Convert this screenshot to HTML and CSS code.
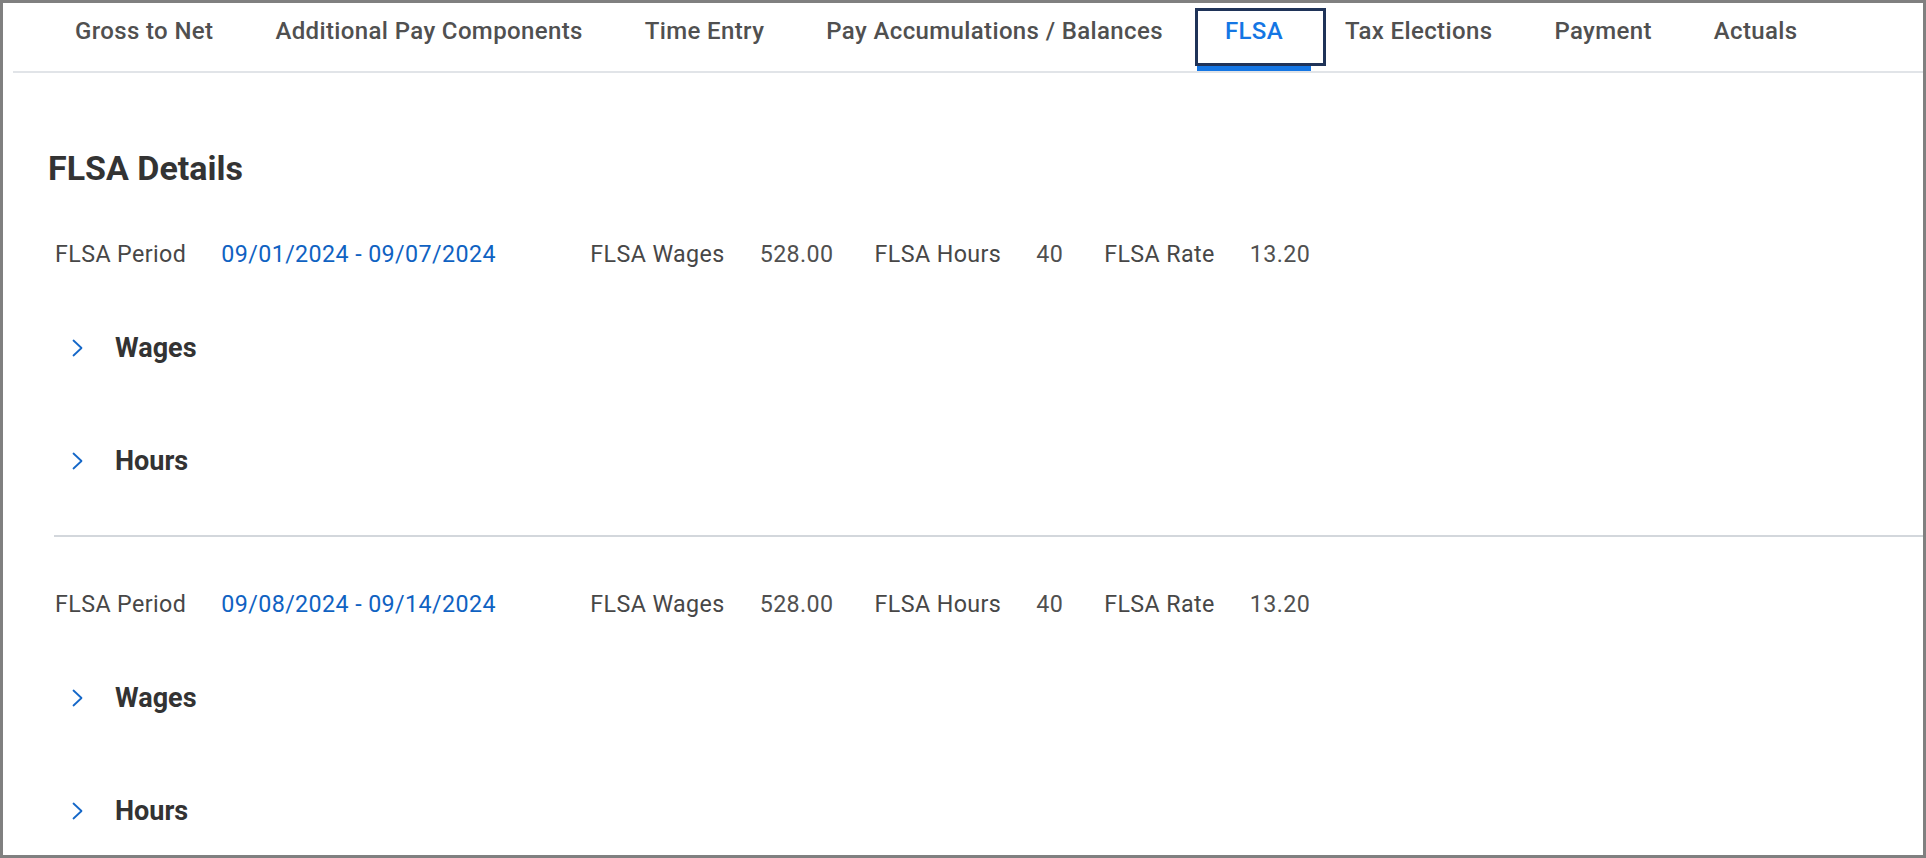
FILE: index.html
```html
<!DOCTYPE html>
<html lang="en">
<head>
<meta charset="utf-8">
<title>FLSA</title>
<link rel="stylesheet" href="styles.css">
</head>
<body>
<div class="frame">
  <nav class="tabbar">
    <a class="tab">Gross to Net</a>
    <a class="tab">Additional Pay Components</a>
    <a class="tab">Time Entry</a>
    <a class="tab">Pay Accumulations / Balances</a>
    <a class="tab active">FLSA</a>
    <a class="tab">Tax Elections</a>
    <a class="tab">Payment</a>
    <a class="tab">Actuals</a>
  </nav>
  <main class="content">
    <h1 class="title">FLSA Details</h1>

    <section class="period">
      <div class="summary">
        <span class="label">FLSA Period</span>
        <span class="value link date">09/01/2024 - 09/07/2024</span>
        <span class="label">FLSA Wages</span>
        <span class="value">528.00</span>
        <span class="label">FLSA Hours</span>
        <span class="value">40</span>
        <span class="label">FLSA Rate</span>
        <span class="value">13.20</span>
      </div>
      <div class="acc">
        <svg class="chev" viewBox="0 0 11 18" width="11" height="18"><polyline points="1.5,1.5 9.5,9 1.5,16.5"/></svg>
        <span class="acc-title">Wages</span>
      </div>
      <div class="acc">
        <svg class="chev" viewBox="0 0 11 18" width="11" height="18"><polyline points="1.5,1.5 9.5,9 1.5,16.5"/></svg>
        <span class="acc-title">Hours</span>
      </div>
    </section>

    <hr class="divider">

    <section class="period">
      <div class="summary">
        <span class="label">FLSA Period</span>
        <span class="value link date">09/08/2024 - 09/14/2024</span>
        <span class="label">FLSA Wages</span>
        <span class="value">528.00</span>
        <span class="label">FLSA Hours</span>
        <span class="value">40</span>
        <span class="label">FLSA Rate</span>
        <span class="value">13.20</span>
      </div>
      <div class="acc">
        <svg class="chev" viewBox="0 0 11 18" width="11" height="18"><polyline points="1.5,1.5 9.5,9 1.5,16.5"/></svg>
        <span class="acc-title">Wages</span>
      </div>
      <div class="acc">
        <svg class="chev" viewBox="0 0 11 18" width="11" height="18"><polyline points="1.5,1.5 9.5,9 1.5,16.5"/></svg>
        <span class="acc-title">Hours</span>
      </div>
    </section>
  </main>
</div>
</body>
</html>
```

FILE: styles.css
```css
* { box-sizing: border-box; }

html, body {
  margin: 0;
  padding: 0;
  background: #ffffff;
}

body {
  font-family: Roboto, "Liberation Sans", Arial, sans-serif;
  color: #4a4a4a;
}

.frame {
  width: 1926px;
  height: 858px;
  border: 3px solid #808080;
  overflow: hidden;
  background: #ffffff;
}

/* Tabs */
.tabbar {
  display: flex;
  gap: 6px;
  margin-left: 10px;
  padding-left: 34px;
  border-bottom: 2px solid #e1e4e8;
}

.tab {
  position: relative;
  display: block;
  padding: 12px 28px 19px;
  line-height: 32px;
  font-size: 24px;
  font-weight: 500;
  letter-spacing: 0.37px;
  color: #505050;
  white-space: nowrap;
  border-bottom: 5px solid transparent;
}

.tab.active {
  color: #1476e4;
  border-bottom-color: #1476e4;
}

.tab.active::after {
  content: "";
  position: absolute;
  left: -2px;
  right: -15px;
  top: 5px;
  bottom: 0;
  border: 3px solid #1f3358;
}

/* Content */
.content {
  padding-left: 45px;
}

.title {
  margin: 75px 0 0;
  font-size: 34px;
  line-height: 40px;
  font-weight: 700;
  color: #333333;
}

.period {
  padding-left: 7px;
}

.title + .period {
  margin-top: 51px;
}

.summary {
  display: flex;
  align-items: center;
  height: 30px;
  font-size: 23.25px;
  letter-spacing: 0.4px;
  line-height: 30px;
  white-space: nowrap;
}

.label {
  color: #474747;
  margin-right: 35px;
}

.value {
  color: #505050;
  margin-right: 41px;
}

.value.date {
  width: 328px;
  margin-right: 41px;
}

.link {
  color: #0f62c2;
}

.acc {
  display: flex;
  align-items: center;
  height: 36px;
  margin-top: 61px;
}

.acc + .acc {
  margin-top: 77px;
}

.chev {
  margin-left: 17px;
  margin-right: 32px;
  fill: none;
  stroke: #1467c8;
  stroke-width: 1.8;
  stroke-linecap: round;
  stroke-linejoin: round;
}

.acc-title {
  font-size: 27px;
  line-height: 36px;
  font-weight: 700;
  color: #333333;
}

.divider {
  margin: 56px 0 52px 6px;
  border: 0;
  border-top: 2px solid #d3d7dc;
  height: 0;
}
```
